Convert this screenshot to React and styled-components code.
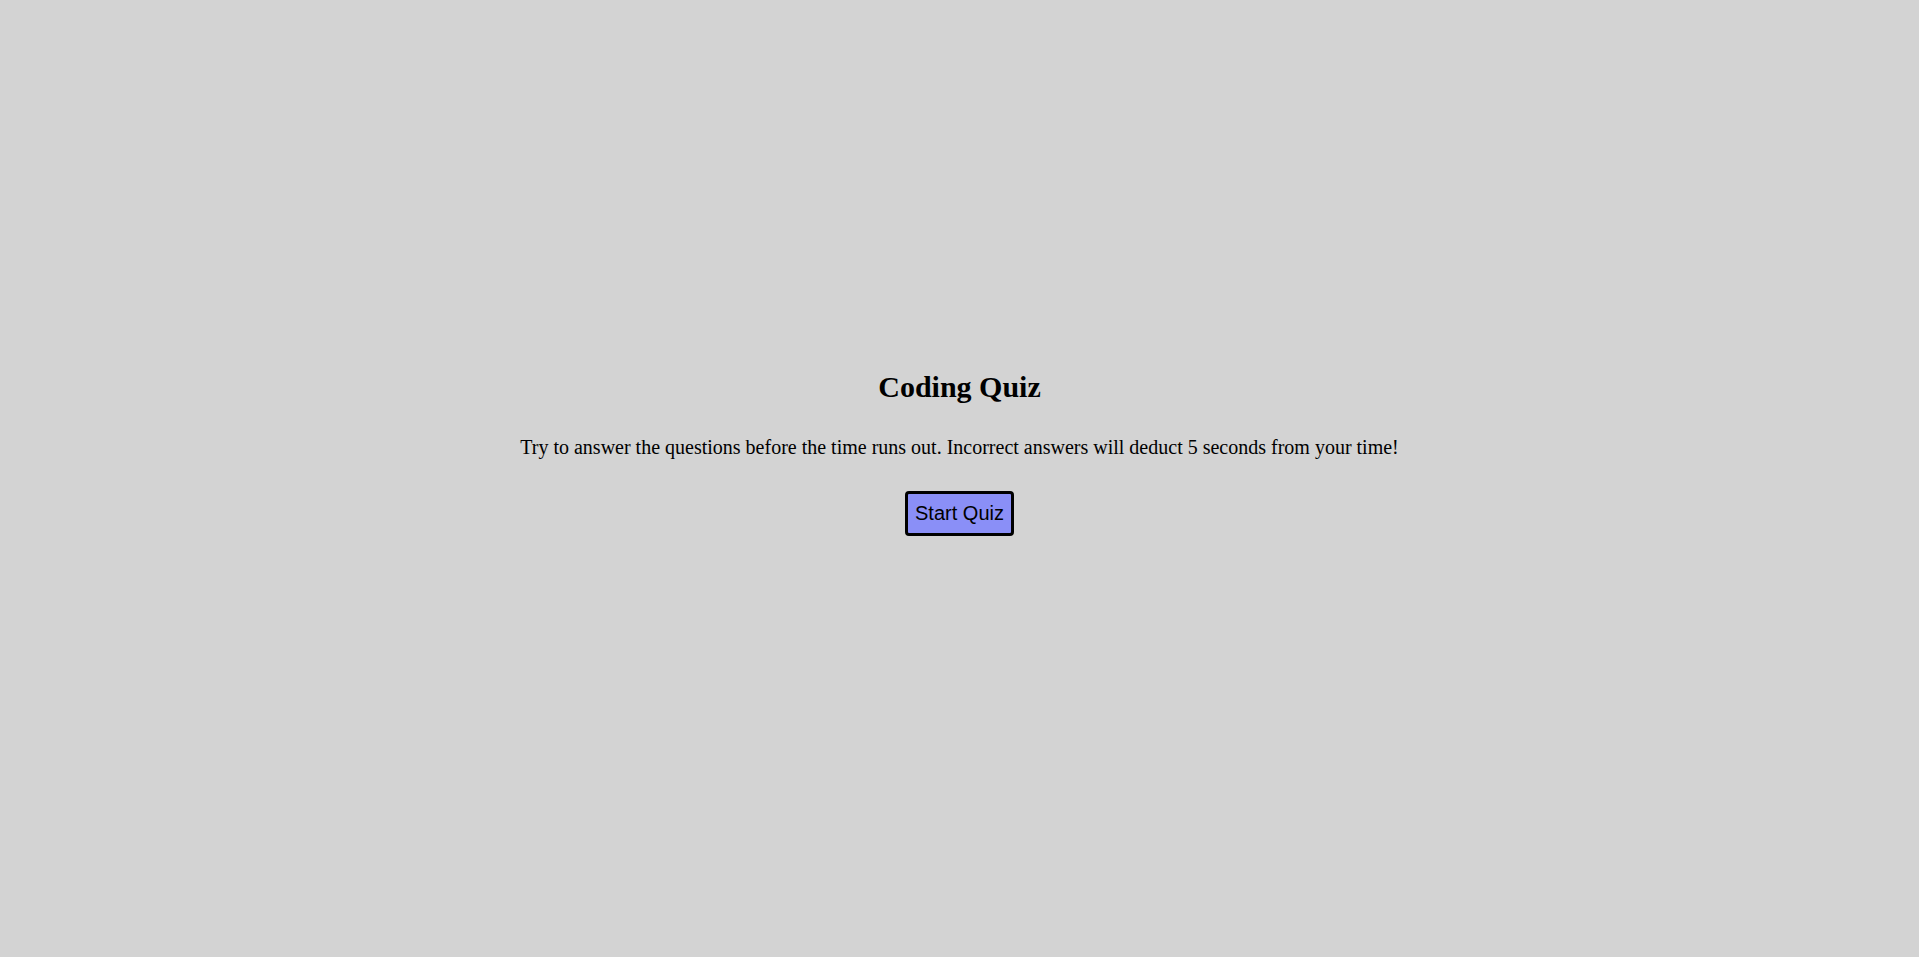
import React from "react"
import styled, { createGlobalStyle } from "styled-components"

const GlobalStyle = createGlobalStyle`
  html, body {
    margin: 0;
    padding: 0;
    background: #d3d3d3;
    font-family: "Liberation Serif", "Times New Roman", serif;
    color: #000;
  }
`

export default function App() {
  return (
    <>
      <GlobalStyle />
      <Wrapper>
        <StartCard>
          <Title>Coding Quiz</Title>
          <Intro>
            Try to answer the questions before the time runs out. Incorrect
            answers will deduct 5 seconds from your time!
          </Intro>
          <StartButton>Start Quiz</StartButton>
        </StartCard>
      </Wrapper>
    </>
  )
}

const Wrapper = styled.div`
  min-height: 957px;
  display: flex;
  justify-content: center;
  padding-top: 369px;
  box-sizing: border-box;
`

const StartCard = styled.div`
  display: flex;
  flex-direction: column;
  align-items: center;
  text-align: center;
`

const Title = styled.h1`
  font-size: 30px;
  font-weight: 700;
  line-height: 36px;
  margin: 0 0 31px;
`

const Intro = styled.p`
  font-size: 20px;
  line-height: 22px;
  margin: 0 0 33px;
`

const StartButton = styled.button`
  font-family: "Liberation Sans", Arial, sans-serif;
  font-size: 20px;
  width: 109px;
  height: 45px;
  padding: 0;
  background: #8a8ff7;
  color: #000;
  border: 3px solid #000;
  border-radius: 4px;
  cursor: pointer;
`
